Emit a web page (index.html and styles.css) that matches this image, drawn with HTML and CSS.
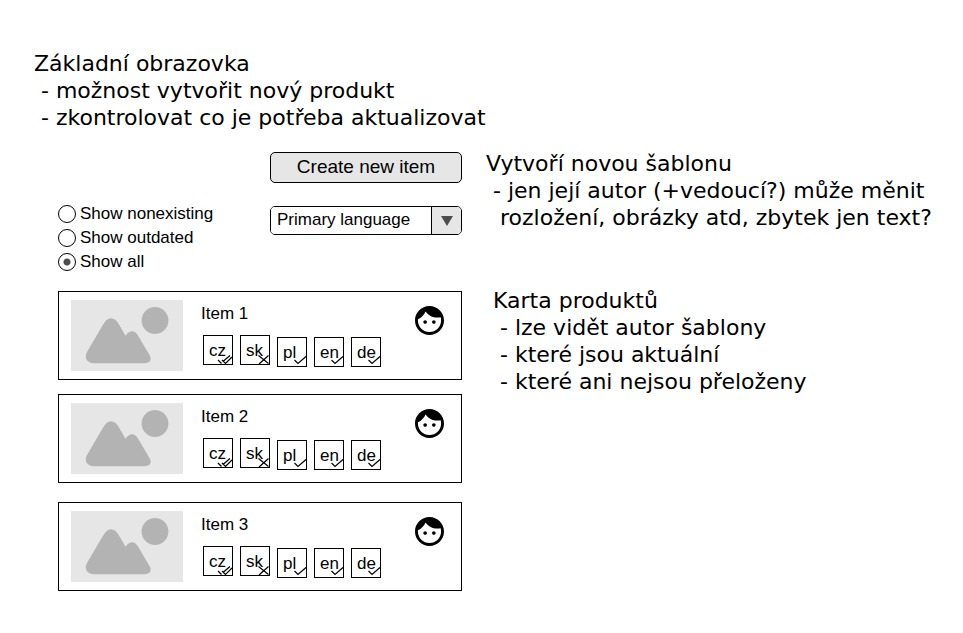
FILE: index.html
```html
<!DOCTYPE html>
<html lang="cs">
<head>
<meta charset="utf-8">
<meta name="viewport" content="width=device-width, initial-scale=1">
<title>Základní obrazovka</title>
<link rel="stylesheet" href="styles.css">
</head>
<body>
<svg class="defs" aria-hidden="true">
  <symbol id="photo" viewBox="0 0 112 71">
    <rect width="112" height="71" fill="#e6e6e6"/>
    <circle cx="84" cy="20.500" r="13.400" fill="#b3b3b3"/>
    <path d="M16 52L31.500 25.500Q35.500 18.200 40 18.200Q44.500 18.200 48 24.500L54.500 35.800Q57.500 31.200 61 31.200Q64.500 31.200 67 35.500L78.500 55C81.500 60 78.500 63.200 73.500 63.200H23.500C15.500 63.200 13 57.500 16 52Z" fill="#b3b3b3"/>
  </symbol>
  <symbol id="face" viewBox="2 2 20 20">
    <path d="M9 11.75c-.69 0-1.250.56-1.250 1.250s.56 1.250 1.250 1.250 1.250-.56 1.250-1.250-.56-1.250-1.250-1.250zm6 0c-.69 0-1.250.56-1.250 1.250s.56 1.250 1.250 1.250 1.250-.56 1.250-1.250-.56-1.250-1.250-1.250zM12 2C6.480 2 2 6.480 2 12s4.480 10 10 10 10-4.480 10-10S17.520 2 12 2zm0 18c-4.410 0-8-3.590-8-8 0-.29.02-.58.05-.86 2.360-1.050 4.230-2.980 5.210-5.370C11.070 8.330 14.050 10 17.420 10c.78 0 1.530-.09 2.250-.26.21.71.33 1.470.33 2.260 0 4.410-3.590 8-8 8z"/>
  </symbol>
  <symbol id="check" viewBox="0 0 30 30">
    <path d="M17.500 23L21 26.500L29 19.500"/>
  </symbol>
  <symbol id="double" viewBox="0 0 30 30">
    <path d="M15 25L18.500 28.500M19 25L22.500 28.500L29 22M20.500 26L27 20.500"/>
  </symbol>
  <symbol id="cross" viewBox="0 0 30 30">
    <path d="M18.500 20.500L28.500 28.500M28.500 20.500L19 29"/>
  </symbol>
</svg>

<main class="page">
  <p class="note intro">Základní obrazovka
 - možnost vytvořit nový produkt
 - zkontrolovat co je potřeba aktualizovat</p>

  <section class="screen">
    <div class="toolbar">
      <fieldset class="filters">
        <label><input type="radio" name="filter">Show nonexisting</label>
        <label><input type="radio" name="filter">Show outdated</label>
        <label><input type="radio" name="filter" checked>Show all</label>
      </fieldset>
      <div class="actions">
        <button type="button" class="create">Create new item</button>
        <div class="dropdown">
          <select aria-label="Primary language"><option>Primary language</option></select>
          <span class="arrow"><svg viewBox="0 0 12 10" width="12" height="10" aria-hidden="true"><path d="M0 0H12L6 10Z"/></svg></span>
        </div>
      </div>
    </div>

    <div class="cards">
      <article class="card">
        <svg class="photo" aria-hidden="true"><use href="#photo"/></svg>
        <div class="details">
          <h2>Item 1</h2>
          <ul class="langs">
            <li>cz<svg><use href="#double"/></svg></li>
            <li>sk<svg><use href="#cross"/></svg></li>
            <li class="low">pl<svg><use href="#check"/></svg></li>
            <li class="low">en<svg><use href="#check"/></svg></li>
            <li class="low">de<svg><use href="#check"/></svg></li>
          </ul>
        </div>
        <svg class="face" aria-hidden="true"><use href="#face"/></svg>
      </article>
      <article class="card">
        <svg class="photo" aria-hidden="true"><use href="#photo"/></svg>
        <div class="details">
          <h2>Item 2</h2>
          <ul class="langs">
            <li>cz<svg><use href="#double"/></svg></li>
            <li>sk<svg><use href="#cross"/></svg></li>
            <li class="low">pl<svg><use href="#check"/></svg></li>
            <li class="low">en<svg><use href="#check"/></svg></li>
            <li class="low">de<svg><use href="#check"/></svg></li>
          </ul>
        </div>
        <svg class="face" aria-hidden="true"><use href="#face"/></svg>
      </article>
      <article class="card">
        <svg class="photo" aria-hidden="true"><use href="#photo"/></svg>
        <div class="details">
          <h2>Item 3</h2>
          <ul class="langs">
            <li>cz<svg><use href="#double"/></svg></li>
            <li>sk<svg><use href="#cross"/></svg></li>
            <li class="low">pl<svg><use href="#check"/></svg></li>
            <li class="low">en<svg><use href="#check"/></svg></li>
            <li class="low">de<svg><use href="#check"/></svg></li>
          </ul>
        </div>
        <svg class="face" aria-hidden="true"><use href="#face"/></svg>
      </article>
    </div>
  </section>

  <aside class="remarks">
    <p class="note">Vytvoří novou šablonu
 - jen její autor (+vedoucí?) může měnit
  rozložení, obrázky atd, zbytek jen text?</p>
    <p class="note"> Karta produktů
  - lze vidět autor šablony
  - které jsou aktuální
  - které ani nejsou přeloženy</p>
  </aside>
</main>
</body>
</html>
```
FILE: styles.css
```css
* {
  box-sizing: border-box;
}

body {
  margin: 0;
  background: #fff;
  color: #000;
  font-family: "Liberation Sans", Arial, sans-serif;
  font-size: 17px;
}

.defs {
  position: absolute;
  width: 0;
  height: 0;
}

.page {
  display: grid;
  grid-template-columns: minmax(0, 404fr) minmax(0, 467fr);
  column-gap: 24px;
  row-gap: 19px;
  padding: 50px 10px 40px 58px;
}

.note {
  margin: 0;
  font-family: "DejaVu Sans", sans-serif;
  font-size: 22px;
  line-height: 27px;
  white-space: pre;
}

.intro {
  grid-column: 1 / -1;
  margin-left: -24px;
}

.remarks {
  display: flex;
  flex-direction: column;
  gap: 56px;
}

.screen {
  padding-top: 2px;
}

.toolbar {
  display: flex;
  justify-content: space-between;
}

.filters {
  margin: 0;
  padding: 50px 0 0;
  border: 0;
}

.filters label {
  display: flex;
  align-items: center;
  gap: 4px;
  height: 24px;
}

.filters input {
  appearance: none;
  width: 18px;
  height: 18px;
  margin: 0;
  border: 1px solid #000;
  border-radius: 50%;
}

.filters input:checked {
  background: radial-gradient(circle, #4d4d4d 3px, transparent 4px);
}

.actions {
  display: flex;
  flex-direction: column;
  gap: 23px;
  width: 192px;
}

.create {
  height: 31px;
  padding: 0 0 2px;
  border: 1px solid #000;
  border-radius: 5px;
  background: #e6e6e6;
  color: #000;
  font: 19px "Liberation Sans", Arial, sans-serif;
}

.dropdown {
  display: flex;
  height: 29px;
  border: 1px solid #000;
  border-radius: 5px;
  overflow: hidden;
}

.dropdown select {
  appearance: none;
  flex: 1;
  min-width: 0;
  padding: 0 0 2px 6px;
  border: 0;
  background: #fff;
  color: #000;
  font: 17px "Liberation Sans", Arial, sans-serif;
}

.arrow {
  display: flex;
  align-items: center;
  justify-content: center;
  width: 30px;
  border-left: 1px solid #000;
  background: #e6e6e6;
  fill: #4d4d4d;
}

.cards {
  display: flex;
  flex-direction: column;
  gap: 14px;
  margin-top: 17px;
}

.card {
  display: flex;
  align-items: flex-start;
  height: 89px;
  padding: 8px 17px 8px 12px;
  border: 1px solid #000;
}

.card:last-child {
  margin-top: 5px;
}

.photo {
  width: 112px;
  height: 71px;
}

.details {
  flex: 1;
  padding: 4px 0 0 18px;
}

.details h2 {
  margin: 0;
  font-size: 17px;
  font-weight: normal;
  line-height: 20px;
}

.langs {
  display: flex;
  gap: 7px;
  margin: 11px 0 0 2px;
  padding: 0;
  list-style: none;
}

.langs li {
  position: relative;
  width: 30px;
  height: 30px;
  padding-left: 5px;
  border: 1px solid #000;
  line-height: 30px;
}

.langs .low {
  margin-top: 2px;
}

.langs svg {
  position: absolute;
  top: -1px;
  left: -1px;
  width: 30px;
  height: 30px;
  fill: none;
  stroke: #000;
  stroke-width: 1.2;
}

.face {
  width: 29px;
  height: 29px;
  margin-top: 6px;
}
```
